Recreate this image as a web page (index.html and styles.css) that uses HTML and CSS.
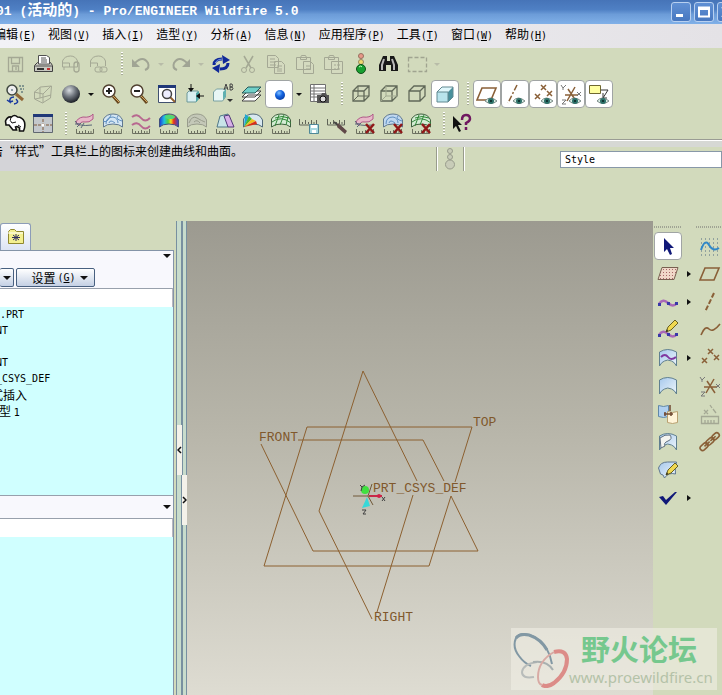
FILE: index.html
```html
<!DOCTYPE html>
<html lang="zh-CN">
<head>
  <meta charset="UTF-8" />
  <title>Pro/ENGINEER Wildfire 5.0</title>
  <link rel="stylesheet" href="styles.css">
</head>
<body>

  <!-- shared icon parts -->
  <svg class="defs" aria-hidden="true">
    <defs>
      <linearGradient id="blue" x1="0" y1="0" x2="1" y2="1">
        <stop offset="0" stop-color="#a6c8ec"/><stop offset="1" stop-color="#eef6fc"/>
      </linearGradient>
      <linearGradient id="rainbow">
        <stop offset="0" stop-color="#2038d8"/><stop offset=".25" stop-color="#20c0e0"/>
        <stop offset=".45" stop-color="#50d040"/><stop offset=".6" stop-color="#f0e020"/>
        <stop offset=".75" stop-color="#e83020"/><stop offset="1" stop-color="#3048d0"/>
      </linearGradient>
      <radialGradient id="ball" cx=".4" cy=".3" r=".7">
        <stop offset="0" stop-color="#d8dce0"/><stop offset=".5" stop-color="#70767e"/><stop offset="1" stop-color="#1c2026"/>
      </radialGradient>
      <radialGradient id="blueball" cx=".4" cy=".3" r=".7">
        <stop offset="0" stop-color="#80c0ff"/><stop offset=".5" stop-color="#1464e0"/><stop offset="1" stop-color="#0840a8"/>
      </radialGradient>
      <pattern id="dots" width="3" height="3" patternUnits="userSpaceOnUse"><path d="M0 0h1v1h-1z" fill="#a86868"/></pattern>
    </defs>
    <symbol id="ruler" viewBox="0 0 22 22"><path d="M2.500 16v4.500h17V16M5.500 18v2M8.500 18v2M11.500 17v3M14.500 18v2M17 18v2" fill="none" stroke="#6c7060"/></symbol>
    <symbol id="surf" viewBox="0 0 22 22"><path d="M1.500 14V6q3-5 9.500-5 7 0 9.500 6v7q-3-3-9.500-3T1.500 14z"/></symbol>
    <symbol id="redx" viewBox="0 0 22 22"><path d="M12 11l8 9M20 11l-8 9" stroke="#901818" stroke-width="2.500"/></symbol>
    <symbol id="eye" viewBox="0 0 22 22"><path d="M9 18q5-6 12 0-6 5-12 0z" fill="#d8ece4" stroke="#7c8c88"/><circle cx="15" cy="18" r="3" fill="#2c7068"/><circle cx="15" cy="18" r="1" fill="#082020"/></symbol>
    <symbol id="glass" viewBox="0 0 22 22"><path d="M13 13l6 7" stroke="#684820" stroke-width="3"/><path d="M13 13l6 6" stroke="#d8a860"/><circle cx="9" cy="8" r="6" fill="#fff" stroke="#504030" stroke-width="1.500"/></symbol>
    <symbol id="plane" viewBox="0 0 22 22"><path d="M6 5h14l-5 12H1z" fill="none" stroke="#8a6038" stroke-width="1.600"/></symbol>
    <symbol id="pts" viewBox="0 0 22 22"><path d="M9 2l5 5M14 2l-5 5M3 11l5 5M8 11l-5 5M15 8l5 5M20 8l-5 5" stroke="#8a6038" stroke-width="1.500"/></symbol>
    <symbol id="csys" viewBox="0 0 22 22"><path d="M5 12h13M8 6l8 12M15 4L7 18" stroke="#8a6038" stroke-width="1.500"/><path d="M1 2l2 3 3-3M3 5v2M17 9l4 4M21 9l-4 4M2 17h4l-4 4h4" fill="none" stroke="#787878"/></symbol>
    <symbol id="cube" viewBox="0 0 22 22"><path d="M3 8h11v10H3zM3 8l5-5h11v10l-5 5M14 8l5-5" fill="none" stroke="#606858" stroke-width="1.300"/></symbol>
    <symbol id="doc" viewBox="0 0 22 22"><path d="M1.500 2.500h8l3 3v9h-11zM4 6h5M4 9h6M4 12h6M8.500 8.500h7l3 3v9h-10zM11 13h5M11 16h5M11 18h5" fill="#d4dabf" stroke="#a4a894"/></symbol>
    <symbol id="light" viewBox="0 0 22 22"><circle cx="11" cy="3" r="2.500"/><circle cx="11" cy="9" r="2.500"/><circle cx="11" cy="16.500" r="4.500"/></symbol>
    <symbol id="face" viewBox="0 0 22 22"><path d="M2.500 19V5q8-5 17 0v14q-2-4-5-5-4-2-7 0-3 1-5 5z" fill="url(#blue)" stroke="#608090"/></symbol>
    <symbol id="pencil" viewBox="0 0 22 22"><path d="M9 13l2-5 7-7 3 3-7 7z" fill="#f0d850" stroke="#686020"/><path d="M9 13l2-1-1-2z" fill="#222"/></symbol>
    <symbol id="wave" viewBox="0 0 22 22"><path d="M2 13q4-6 9-1t9 0" fill="none" stroke="#a868b8" stroke-width="2.500"/><path d="M1 12h3v3H1zM10 11h3v3h-3zM18 11h3v3h-3z" fill="#3838a8"/></symbol>
  </svg>

  <header class="title-bar">
    <h1>01 (<span>活动的</span>) - Pro/ENGINEER Wildfire 5.0</h1>
    <div class="window-buttons">
      <button aria-label="最小化"><svg width="18" height="18"><path d="M4 11h7v3H4z" fill="#fff"/></svg></button>
      <button aria-label="最大化"><svg width="18" height="18"><path d="M4 4.500h10v9H4zM4 6h10" fill="none" stroke="#fff" stroke-width="2"/></svg></button>
      <button aria-label="关闭"><svg width="18" height="18"><path d="M4 4l10 10M14 4L4 14" stroke="#fff" stroke-width="2"/></svg></button>
    </div>
  </header>

  <nav class="menu-bar">
    <button>编辑<span class="latin">(<u>E</u>)</span></button>
    <button>视图<span class="latin">(<u>V</u>)</span></button>
    <button>插入<span class="latin">(<u>I</u>)</span></button>
    <button>造型<span class="latin">(<u>Y</u>)</span></button>
    <button>分析<span class="latin">(<u>A</u>)</span></button>
    <button>信息<span class="latin">(<u>N</u>)</span></button>
    <button>应用程序<span class="latin">(<u>P</u>)</span></button>
    <button>工具<span class="latin">(<u>T</u>)</span></button>
    <button>窗口<span class="latin">(<u>W</u>)</span></button>
    <button>帮助<span class="latin">(<u>H</u>)</span></button>
  </nav>

  <div class="toolbars">
    <!-- file / edit -->
    <div class="toolbar">
      <button class="tool" aria-label="保存"><svg class="icon"><path d="M4.500 4.500h14v14h-14zM7.500 4.500v6h8v-6M8.500 18v-5h6v5M12 14v3" fill="none" stroke="#a4a894" stroke-width="1.300"/></svg></button>
      <button class="tool" aria-label="打印"><svg class="icon"><path d="M2.500 12.500l3-3h13l2 3v6h-18z" fill="#c8c8c0" stroke="#404040"/><path d="M6.500 11V2.500h8l3 2V11z" fill="#fff" stroke="#505050"/><path d="M9 5h5M9 7h6M9 9h6M3 13h17" stroke="#555"/><path d="M5 16h7" stroke="#333" stroke-width="2"/><path d="M15 15h3v2h-3z" fill="#c03030"/></svg></button>
      <button class="tool" aria-label="发送附件"><svg class="icon"><path d="M2.500 14V8q2-5 8-5 5 0 7 5v6zM2.500 10h7v4M4 14v3" fill="none" stroke="#a4a894"/><rect x="14" y="9" width="5" height="10" rx="2.500" fill="none" stroke="#a4a894" stroke-width="1.300"/></svg></button>
      <button class="tool" aria-label="发送链接"><svg class="icon"><path d="M2.500 14V8q2-5 8-5 5 0 7 5v5M2.500 10h7v3" fill="none" stroke="#a4a894"/><rect x="7" y="14" width="7" height="5" rx="2" fill="none" stroke="#a4a894"/><rect x="12" y="14" width="7" height="5" rx="2" fill="none" stroke="#a4a894"/></svg></button>
      <i class="grip"></i>
      <button class="tool" aria-label="撤消"><svg class="icon"><path d="M5 10q8-8 13 0 2 5-3 7" fill="none" stroke="#a0a494" stroke-width="2"/><path d="M2 6v8h8z" fill="#a0a494"/></svg></button>
      <i class="more off"></i>
      <button class="tool" aria-label="重做"><svg class="icon"><path d="M17 10Q9 2 4 10q-2 5 3 7" fill="none" stroke="#a0a494" stroke-width="2"/><path d="M20 6v8h-8z" fill="#a0a494"/></svg></button>
      <i class="more off"></i>
      <button class="tool" aria-label="再生"><svg class="icon"><path d="M4 12q0-6 8-6M18 10q0 6-8 6" fill="none" stroke="#102898" stroke-width="3"/><path d="M12 2l8 5-7 4zM10 11l-8 4 7 5z" fill="#102898"/><path d="M5 10q2-4 7-4" fill="none" stroke="#7090e0"/></svg></button>
      <button class="tool" aria-label="剪切"><svg class="icon"><path d="M6 3l7 12M15 3L8 15" stroke="#a4a894" stroke-width="1.500"/><circle cx="6" cy="17" r="2.500" fill="none" stroke="#a4a894"/><circle cx="14" cy="17" r="2.500" fill="none" stroke="#a4a894"/></svg></button>
      <button class="tool" aria-label="复制"><svg class="icon"><use href="#doc"/></svg></button>
      <button class="tool" aria-label="粘贴"><svg class="icon"><path d="M2.500 4.500h14v12h-14zM6.500 4.500l1-2h4l1 2v2h-6zM9.500 8.500h7l3 3v9h-10zM12 13h5M12 16h5" fill="#d4dabf" stroke="#a4a894"/></svg></button>
      <button class="tool" aria-label="选择性粘贴"><svg class="icon"><path d="M2.500 4.500h14v12h-14zM6.500 4.500l1-2h4l1 2v2h-6zM9.500 8.500h11v12h-11zM12 12h2M15 12h3M12 16h2M15 16h3" fill="#d4dabf" stroke="#a4a894"/></svg></button>
      <button class="tool" aria-label="再生管理器"><svg class="icon"><circle cx="11" cy="3" r="2.500" fill="#e89888" stroke="#987060"/><circle cx="11" cy="9" r="2.500" fill="#f0d870" stroke="#988860"/><circle cx="11" cy="16" r="4.500" fill="#18a030" stroke="#105018"/><path d="M9 14q2-2 3 0" stroke="#c0ffc0" fill="none"/></svg></button>
      <button class="tool" aria-label="查找"><svg class="icon"><path d="M5 3h4v5h3V3h4l4 9v6h-7v-6h-5v6H1v-6z" fill="#181818"/><path d="M6 6L4 12v5M14 6l2 6v5" fill="none" stroke="#b8b8b8" stroke-width="2"/></svg></button>
      <button class="tool" aria-label="选取框"><svg class="icon"><path d="M2.500 4.500h18v14h-18z" fill="none" stroke="#a0a490" stroke-width="1.300" stroke-dasharray="4 2"/></svg></button>
      <i class="more off"></i>
    </div>

    <!-- view / datum display -->
    <div class="toolbar">
      <button class="tool" aria-label="重定向"><svg class="icon"><path d="M12 11l7 6" stroke="#906838" stroke-width="3"/><circle cx="8" cy="7" r="5" fill="#eee" stroke="#404840" stroke-width="1.500"/><path d="M7 7h3M15 3h5M16 6h4M17 9h2" stroke="#305060" stroke-dasharray="2 1"/><path d="M10 14q-5 0-4 5l-3-2M6 19l3-1M12 16q4 4-2 5" fill="none" stroke="#1838a0" stroke-width="1.500"/></svg></button>
      <button class="tool" aria-label="线框"><svg class="icon"><path d="M2.500 9l6-5 11-1-1 12-8 5-8-4zM2 9l9 2 8-8M11 11v9M8 4v11l11-3M8 15l-5 1" fill="none" stroke="#a4a894"/></svg></button>
      <button class="tool" aria-label="着色"><svg class="icon"><circle cx="11" cy="11" r="9" fill="url(#ball)"/></svg></button>
      <i class="more"></i>
      <button class="tool" aria-label="放大"><svg class="icon"><use href="#glass"/><path d="M6 8h6M9 5v6" stroke="#222" stroke-width="2"/></svg></button>
      <button class="tool" aria-label="缩小"><svg class="icon"><use href="#glass"/><path d="M6 8h6" stroke="#222" stroke-width="2"/></svg></button>
      <button class="tool" aria-label="重新调整"><svg class="icon"><path d="M2.500 2.500h17v17h-17z" fill="#fff" stroke="#405070"/><path d="M2 2h18v3H2z" fill="#203878"/><path d="M14 14l5 5" stroke="#906030" stroke-width="2"/><circle cx="11" cy="11" r="4.500" fill="#eef" stroke="#444" stroke-width="1.500"/></svg></button>
      <button class="tool" aria-label="定向"><svg class="icon"><path d="M3 10l2-2h9v8l-2 3H3z" fill="#d8eef0" stroke="#6c9898"/><path d="M12 10v9l3-3V8z" fill="#50a8a8"/><path d="M7 1v7M20 13h-6" stroke="#111"/><path d="M4 5h6l-3 4zM16 10v6l-4-3z" fill="#111"/></svg></button>
      <button class="tool" aria-label="已命名视图"><svg class="icon"><path d="M1.500 9l3-3h9v8l-3 4h-9z" fill="#e8f6f4" stroke="#78a0a0"/><path d="M11 9v8l3-4V6z" fill="#60b0b0"/><path d="M12 7l2-6 2 6M13 5h3M18 1v6h2q2-1 0-3h-2 2q1-2 0-3z" fill="none" stroke="#444"/><path d="M15 16h6l-3 3z" fill="#333"/></svg></button>
      <button class="tool" aria-label="层"><svg class="icon"><path d="M8 12h13l-6 6H2zM8 8h13l-6 6H2z" fill="#fff" stroke="#444"/><path d="M8 4h13l-6 6H2z" fill="#70d0c8" stroke="#285858"/></svg></button>
      <button class="tool pressed" aria-label="外观库"><svg class="icon"><circle cx="12" cy="12" r="5" fill="url(#blueball)"/></svg></button>
      <i class="more"></i>
      <button class="tool" aria-label="视图管理器"><svg class="icon"><path d="M2.500 1.500h15v17h-15zM2 5h15M2 8h15M2 11h15M2 14h15M6 1v17" fill="#fff" stroke="#707070"/><path d="M9 12h4l1-2h4l1 2h2v8H9z" fill="#555"/><circle cx="15" cy="16" r="3" fill="#ddd" stroke="#111"/></svg></button>
      <i class="grip"></i>
      <button class="tool" aria-label="线框显示"><svg class="icon"><use href="#cube"/><path d="M8 3v10h11M8 13l-5 5" fill="none" stroke="#606858"/></svg></button>
      <button class="tool" aria-label="隐藏线"><svg class="icon"><use href="#cube"/><path d="M8 3v10h11M8 13l-5 5" fill="none" stroke="#a0a890"/></svg></button>
      <button class="tool" aria-label="无隐藏线"><svg class="icon"><use href="#cube"/></svg></button>
      <button class="tool pressed" aria-label="着色显示"><svg class="icon"><path d="M3 9h11v10H3z" fill="#b8e4ec"/><path d="M3 9l5-5h11l-5 5z" fill="#e0f8fc"/><path d="M14 9l5-5v10l-5 5z" fill="#48909c"/><path d="M3 9l5-5h11v10l-5 5H3zh11v10" fill="none" stroke="#608890"/></svg></button>
      <i class="grip"></i>
      <button class="tool pressed" aria-label="基准平面开关"><svg class="icon"><use href="#plane"/><use href="#eye"/></svg></button>
      <button class="tool pressed" aria-label="基准轴开关"><svg class="icon"><path d="M13 2L4 20" stroke="#8a6038" stroke-width="1.500" stroke-dasharray="6 2 2 2"/><use href="#eye"/></svg></button>
      <button class="tool pressed" aria-label="基准点开关"><svg class="icon"><use href="#pts"/><use href="#eye"/></svg></button>
      <button class="tool pressed" aria-label="坐标系开关"><svg class="icon"><use href="#csys"/><use href="#eye"/></svg></button>
      <button class="tool pressed" aria-label="注释开关"><svg class="icon"><path d="M1.500 2.500h11v8h-11z" fill="#ffffa0" stroke="#706830"/><path d="M13 7h7l-5 8M15 10v5h4" fill="none" stroke="#333"/><use href="#eye"/></svg></button>
    </div>

    <!-- analysis -->
    <div class="toolbar">
      <button class="tool" aria-label="线框模型"><svg class="icon"><path d="M1.500 8q2-5 6-4 3-3 6 0 5 0 7 5 1 5-1 9h-4v-3q-2-2-4-1l1 3H9l-4-5H2z" fill="#fff" stroke="#111" stroke-width="1.600"/><path d="M7 4q-2 4 1 6l4-1M14 12l3 2" fill="none" stroke="#111"/></svg></button>
      <button class="tool" aria-label="活动视图"><svg class="icon"><path d="M1.500 2.500h19v17h-19z" fill="#c4c8cc" stroke="#606870"/><path d="M1 1h20v3H1z" fill="#203878"/><path d="M11 6v13M2 12h18" stroke="#805838" stroke-dasharray="3 1"/><circle cx="11" cy="12" r="1.500" fill="#fff"/></svg></button>
      <i class="grip"></i>
      <button class="tool" aria-label="曲率"><svg class="icon"><path d="M2 10q1-5 7-6 7 1 10-3v5q-4 4-8 3-5-1-6 4z" fill="#e8b8c8" stroke="#b05888"/><path d="M1 8q3 6 17 4M3 14l4-4M7 15l3-5M1 11h5" fill="none" stroke="#586878"/><use href="#ruler"/></svg></button>
      <button class="tool" aria-label="截面"><svg class="icon"><use href="#surf" fill="#d4e6f4" stroke="#607890"/><path d="M4 11q0-7 7-7 5 1 5 6M7 10q1-4 6 0M16 3q-3 3 4 5M1 8q4 3 8-6" fill="none" stroke="#6090c0"/><use href="#ruler"/></svg></button>
      <button class="tool" aria-label="偏移"><svg class="icon"><path d="M2 4q5-4 9 1t9 0M2 12q5-4 9 1t9 0" fill="none" stroke="#b86890" stroke-width="2"/><use href="#ruler"/></svg></button>
      <button class="tool" aria-label="着色曲率"><svg class="icon"><use href="#surf" fill="url(#rainbow)" stroke="#405080"/><ellipse cx="12" cy="4" rx="5" ry="2" fill="#50d878"/><use href="#ruler"/></svg></button>
      <button class="tool" aria-label="反射"><svg class="icon"><use href="#surf" fill="#c4c8b8" stroke="#989c8c"/><path d="M3 10q3-8 8-5t8 4M8 9q3-3 6 1" fill="none" stroke="#989c8c"/><use href="#ruler"/></svg></button>
      <button class="tool" aria-label="拔模"><svg class="icon"><path d="M3 14L6 3l8-2v13z" fill="#c8e4e8" stroke="#507888"/><path d="M10 3l5-1 5 12h-6z" fill="#d8b0e8" stroke="#503878"/><use href="#ruler"/></svg></button>
      <button class="tool" aria-label="斜率"><svg class="icon"><use href="#surf" fill="#d8e8f0" stroke="#506878"/><path d="M2 14L3 1l4 3z" fill="#20a8d0"/><path d="M2 14L7 3l3 3z" fill="#48b830"/><path d="M2 14l8-8 4 2z" fill="#f0c020"/><path d="M2 14l12-6 1 3z" fill="#d83018"/><use href="#ruler"/></svg></button>
      <button class="tool" aria-label="曲面节点"><svg class="icon"><use href="#surf" fill="#d4ecd4" stroke="#406040"/><path d="M2 9q9-7 19 1M5 13L9 2M10 12l4-10M16 12l2-8M5 5q7-3 14 0" fill="none" stroke="#308838"/><use href="#ruler"/></svg></button>
      <button class="tool" aria-label="保存的分析"><svg class="icon"><path d="M1.500 6v6h17V7M4.500 9v2M7.500 7v4M10.500 9v2M13.500 7v4M16 9v2" fill="none" stroke="#606458"/><path d="M11.500 11.500h9v9h-9z" fill="#a8d8e0" stroke="#508898"/><path d="M13 12h6v3h-6zM14 17h4v3h-4z" fill="#fff"/></svg></button>
      <button class="tool" aria-label="隐藏分析"><svg class="icon"><path d="M1.500 6v6h17V7M4.500 9v2M7.500 7v4M10.500 9v2M13.500 7v4M16 9v2" fill="none" stroke="#606458"/><path d="M8 9l9 7" stroke="#444" stroke-width="2"/><path d="M12 10l9 8-2 3-8-7z" fill="#604848"/></svg></button>
      <button class="tool" aria-label="删除曲率"><svg class="icon"><path d="M2 10q1-5 7-6 7 1 10-3v5q-4 4-8 3-5-1-6 4z" fill="#e8b8c8" stroke="#b05888"/><path d="M1 8q3 6 17 4M3 14l4-4M1 11h5" fill="none" stroke="#586878"/><use href="#ruler"/><use href="#redx"/></svg></button>
      <button class="tool" aria-label="删除截面"><svg class="icon"><use href="#surf" fill="#c0d8f0" stroke="#607890"/><path d="M4 11q0-7 7-7 5 1 5 6M7 10q1-4 6 0M16 3q-3 3 4 5" fill="none" stroke="#6090c0"/><use href="#ruler"/><use href="#redx"/></svg></button>
      <button class="tool" aria-label="删除节点"><svg class="icon"><use href="#surf" fill="#d4ecd4" stroke="#406040"/><path d="M2 9q9-7 19 1M5 13L9 2M10 12l4-10M5 5q7-3 14 0" fill="none" stroke="#308838"/><use href="#ruler"/><use href="#redx"/></svg></button>
      <i class="grip"></i>
      <button class="tool" aria-label="上下文帮助"><svg class="icon"><path d="M1 3v13l3-3 3 6 2-1-3-6h4z" fill="#111"/><path d="M10 7q0-5 4-5t4 4q0 2-4 4v2M14 14v3" fill="none" stroke="#701860" stroke-width="2.500"/></svg></button>
    </div>
  </div>

  <div class="status-bar">
    <p class="message">击“样式”工具栏上的图标来创建曲线和曲面。</p>
    <div class="status-tools">
      <span class="lamp"><svg class="icon" fill="#c8ccb8" stroke="#989c8c"><use href="#light"/></svg></span>
      <select class="latin" aria-label="过滤器"><option>Style</option></select>
    </div>
  </div>

  <main class="workspace">
    <!-- model tree -->
    <aside class="navigator">
      <div class="tabs">
        <button class="tab" aria-label="模型树"><svg width="18" height="18"><path d="M1.500 15.500v-12l2-2h4l2 2h7v12z" fill="#f4f090" stroke="#908830"/><path d="M1 5h15" stroke="#fff"/><path d="M9 6v7M5 9.500h8M6 7l6 5M12 7l-6 5" stroke="#303060"/></svg></button>
      </div>
      <div class="panel">
        <div class="panel-head"><i class="down"></i></div>
        <div class="panel-buttons">
          <button class="drop" aria-label="显示"><i class="down"></i></button>
          <button class="drop wide">设置<span class="latin">(<u>G</u>)</span><i class="down"></i></button>
        </div>
        <div class="column-head"></div>
        <ul class="tree latin">
          <li>.PRT</li>
          <li>NT</li>
          <li></li>
          <li>NT</li>
          <li>_CSYS_DEF</li>
          <li class="cjk">式插入</li>
          <li class="cjk">型 <span class="latin">1</span></li>
        </ul>
        <div class="style-head"><i class="down"></i></div>
        <div class="column-head"></div>
        <div class="style-tree"></div>
      </div>
    </aside>

    <div class="splitter">
      <button class="handle" aria-label="收起"><svg width="5" height="8"><path d="M4 1L1 4l3 3" fill="none" stroke="#111" stroke-width="1.500"/></svg></button>
      <button class="handle right" aria-label="展开"><svg width="5" height="8"><path d="M1 1l3 3-3 3" fill="none" stroke="#111" stroke-width="1.500"/></svg></button>
    </div>

    <svg class="viewport">
      <!-- datum planes: RIGHT, TOP, FRONT -->
      <g class="datum">
        <path d="M230 260L176 150L132 290L185 398M190 391L226 274"/>
        <path d="M268 261L285 206H120L77 345H242L264 275"/>
        <path d="M74 223L126 330H291L264 275M111 219H236L257 260"/>
      </g>
      <!-- coordinate system -->
      <path d="M166 275h15M181 275l4-12M181 275l5 9" stroke="#705838"/>
      <path d="M182 275h13" stroke="#c82848" stroke-width="2"/>
      <circle cx="192" cy="275" r="2" fill="#d02048"/>
      <circle cx="178" cy="269" r="4" fill="#40e040"/>
      <path d="M180 276l3 9-8 2z" fill="#38d8d8"/>
      <path d="M173 264l2 2 3-2M175 266l-1 4M195 276l3 4M198 276l-3 4M175 289h4l-3 4h3" fill="none" stroke="#404040"/>
      <g class="labels">
        <text x="72" y="220">FRONT</text>
        <text x="286" y="205">TOP</text>
        <text x="186" y="271">PRT_CSYS_DEF</text>
        <text x="187" y="400">RIGHT</text>
      </g>
    </svg>

    <aside class="side-tools">
      <i class="side-grip"></i><i></i><i class="side-grip"></i>
      <button class="tool pressed" aria-label="选取"><svg class="icon"><path d="M7 3v14l3-3 3 6 2-1-2-6h4z" fill="#101878"/></svg></button><i></i>
      <button class="tool" aria-label="造型"><svg class="icon"><path d="M2 4h18M2 8h18M2 12h18M2 16h18M2 20h18" stroke="#506880" stroke-dasharray="1 3"/><path d="M2 15q4-12 8-5t10 3" fill="none" stroke="#3088c8" stroke-width="2"/></svg></button>
      <button class="tool" aria-label="活动平面"><svg class="icon"><path d="M5 4.500h16l-4 12H1z" fill="#f0d8c8"/><path d="M5 4.500h16l-4 12H1z" fill="url(#dots)" stroke="#786050"/></svg></button><i class="next"></i>
      <button class="tool" aria-label="平面"><svg class="icon"><use href="#plane"/></svg></button>
      <button class="tool" aria-label="曲线"><svg class="icon"><use href="#wave"/></svg></button><i class="next"></i>
      <button class="tool" aria-label="轴"><svg class="icon"><path d="M15 2L6 21" stroke="#8a6038" stroke-width="2" stroke-dasharray="5 2"/></svg></button>
      <button class="tool" aria-label="编辑曲线"><svg class="icon"><use href="#wave" y="3"/><use href="#pencil"/></svg></button><i></i>
      <button class="tool" aria-label="基准曲线"><svg class="icon"><path d="M2 16Q6 6 10 10t11-5" fill="none" stroke="#8a6038" stroke-width="1.600"/></svg></button>
      <button class="tool" aria-label="投影曲线"><svg class="icon"><use href="#face"/><path d="M4 10q4-4 7 0t8 0" fill="none" stroke="#8038a0" stroke-width="2"/></svg></button><i class="next"></i>
      <button class="tool" aria-label="基准点"><svg class="icon"><use href="#pts"/></svg></button>
      <button class="tool" aria-label="曲面"><svg class="icon"><use href="#face"/></svg></button><i></i>
      <button class="tool" aria-label="坐标系"><svg class="icon"><use href="#csys"/></svg></button>
      <button class="tool" aria-label="连接曲面"><svg class="icon"><path d="M1.500 2.500q5 2 10 0v11q-5 2-10 0z" fill="#b0d0f0" stroke="#6088a8"/><path d="M10.500 8.500q5 2 10 0v11q-5 2-10 0z" fill="#fff4d8" stroke="#b8a070"/><path d="M7 11h9M8 9v4M14 9v4M13 2v6" stroke="#704830" stroke-width="1.500"/></svg></button><i></i>
      <button class="tool" aria-label="分析点"><svg class="icon"><path d="M2.500 13.500h17v7h-17zM6 17v3M9 17v3M12 17v3M15 17v3M5 7l4 4M9 7l-4 4M11 2l2 3M14 6l3 4" fill="none" stroke="#a4a894" stroke-width="1.300"/></svg></button>
      <button class="tool" aria-label="修剪曲面"><svg class="icon"><use href="#face"/><path d="M4 17l4-2q-2-3 3-5t2-6q-5-1-10 3z" fill="#f4f4f0" stroke="#607080"/></svg></button><i></i>
      <button class="tool" aria-label="链接"><svg class="icon" fill="none" stroke="#8a6038" stroke-width="1.600"><g transform="rotate(-42 11 11)"><rect x="-1" y="8" width="9" height="5" rx="2.500"/><rect x="7" y="8" width="9" height="5" rx="2.500"/><rect x="15" y="8" width="8" height="5" rx="2.500"/><path d="M4 10.500h7M12 10.500h7"/></g></svg></button>
      <button class="tool" aria-label="编辑曲面"><svg class="icon"><path d="M1.500 9q2-6 9-6h9q-2 6-1 12-7-2-11 4-1-4-4-4z" fill="url(#blue)" stroke="#607890"/><use href="#pencil" y="3"/></svg></button><i></i><i></i>
      <button class="tool" aria-label="完成"><svg class="icon"><path d="M2 10l4-1 3 4 9-8h2L9 18z" fill="#101878"/></svg></button><i class="next"></i><i></i>
    </aside>
  </main>

  <div class="watermark">
    <svg width="58" height="58" fill="none">
      <path d="M41 34Q38 16 25 8 10 0 5 8 1 17 8 26q5 7 12 10" stroke="#8298a4" stroke-width="2"/>
      <path d="M36 20Q30 9 18 5 9 3 5 8" stroke="#8298a4" stroke-width="3"/>
      <path d="M26 32q-14 2-15 10 0 7 12 5" stroke="#b8bcba" stroke-width="2"/>
      <path d="M22 32q14-2 20 8" stroke="#a8b0b0" stroke-width="2"/>
      <path d="M43 22q12-3 13 7 0 14-13 24-7 5-12 2" stroke="#dc8c88" stroke-width="4"/>
      <path d="M43 22q-16 9-16 25 0 7 4 8" stroke="#d8aaa4" stroke-width="2"/>
    </svg>
    <div>
      <strong>野火论坛</strong>
      <a href="#">www.proewildfire.cn</a>
    </div>
  </div>

</body>
</html>
```
FILE: styles.css
```css
* {
  box-sizing: border-box;
}

body {
  margin: 0;
  height: 100vh;
  display: flex;
  flex-direction: column;
  overflow: hidden;
  position: relative;
  background: #d2dabc;
  color: #000;
  font: 12px/16px "Noto Sans CJK SC", sans-serif;
}

button {
  margin: 0;
  padding: 0;
  border: 0;
  background: none;
  color: inherit;
  font: inherit;
}

.latin {
  font-family: "DejaVu Sans Mono", "Noto Sans CJK SC", monospace;
  font-size: 10px;
}

.defs {
  position: absolute;
  width: 0;
  height: 0;
}

.icon {
  display: block;
  flex: none;
  width: 22px;
  height: 22px;
}

/* title and menu */
.title-bar {
  flex: none;
  display: flex;
  justify-content: space-between;
  height: 24px;
  background: linear-gradient(#4674b8, #4f80c4 40%, #6c9cd8 60%, #80b0e8);
  overflow: hidden;
}

.title-bar h1 {
  margin: 0 0 0 -4px;
  color: #fff;
  font: bold 13px/24px "Liberation Mono", "Noto Sans CJK SC", monospace;
  white-space: nowrap;
}

.title-bar h1 span {
  font-size: 15px;
}

.window-buttons {
  display: flex;
  gap: 3px;
  padding-top: 2px;
  margin-right: -15px;
}

.window-buttons button {
  width: 20px;
  height: 20px;
  border: 1px solid #b8d0f0;
  border-radius: 3px;
  background: linear-gradient(#6090d4, #4878c0);
}

.window-buttons svg {
  display: block;
}

.menu-bar {
  flex: none;
  display: flex;
  gap: 12px;
  height: 24px;
  padding-bottom: 2px;
  background: linear-gradient(90deg, #f2f2f6, #e4e2e6);
}

.menu-bar button {
  white-space: nowrap;
}

.menu-bar button:first-child {
  margin-left: -6px;
}

/* tool bars */
.toolbars {
  flex: none;
  padding: 1px 0 0 1px;
  border-bottom: 1px solid #9a9c94;
  box-shadow: 0 1px #fff;
}

.toolbar {
  display: flex;
  align-items: center;
  height: 30px;
}

.tool {
  display: flex;
  flex: none;
  align-items: center;
  justify-content: center;
  width: 28px;
  height: 28px;
}

.pressed {
  border: 1px solid #a0a4a4;
  border-radius: 4px;
  background: #fff;
}

.grip {
  flex: none;
  width: 14px;
  height: 24px;
  background: repeating-linear-gradient(#fff 0 1px, #a8ac98 1px 2px, #d2dabc 2px 3px) 8px 0 / 2px 24px no-repeat;
}

.more,
.down {
  flex: none;
  width: 12px;
}

.more::before,
.down::before {
  content: "";
  display: block;
  width: 0;
  margin: auto;
  border: 3px solid transparent;
  border-top-color: #111;
  border-bottom: 0;
}

.down::before {
  border-width: 4px 4px 0;
}

.more.off::before {
  border-top-color: #b8bca8;
}

.next::before {
  content: "";
  display: block;
  width: 0;
  margin: 11px 5px;
  border: 3px solid transparent;
  border-left: 4px solid #111;
  border-right: 0;
}

/* message line */
.status-bar {
  flex: none;
  display: flex;
  height: 31px;
  padding-top: 1px;
}

.message {
  flex: 0 0 400px;
  margin: 0;
  padding-top: 2px;
  background: #d4d4d8;
  text-indent: -9px;
  white-space: nowrap;
  overflow: hidden;
}

.status-tools {
  flex: 1;
  display: flex;
  align-items: center;
  border-top: 6px solid #d6d8d4;
  padding-left: 36px;
}

.lamp {
  margin-right: 96px;
  padding: 1px 2px;
  border: 1px solid #989c8c;
  border-width: 0 1px;
  box-shadow: 1px 0 #fff, inset 1px 0 #fff;
}

.status-tools select {
  flex: 1;
  height: 17px;
  padding: 0 4px;
  border: 1px solid #8898a8;
  border-radius: 0;
  background: #fff;
  color: #000;
  appearance: none;
}

/* work area */
.workspace {
  flex: 1;
  display: flex;
  min-height: 0;
  padding-top: 50px;
}

.navigator {
  flex: none;
  display: flex;
  flex-direction: column;
  width: 174px;
  padding-top: 2px;
}

.tab {
  display: flex;
  align-items: center;
  justify-content: center;
  width: 31px;
  height: 27px;
  border: 1px solid #8c9cb8;
  border-bottom: 0;
  border-radius: 3px 3px 0 0;
  background: linear-gradient(#fff, #dce4f4);
}

.panel {
  flex: 1;
  display: flex;
  flex-direction: column;
  border: 1px solid #8494a8;
  border-width: 1px 1px 0 0;
  background: #f8f8fd;
}

.panel-head,
.style-head {
  display: flex;
  justify-content: flex-end;
}

.panel-head {
  height: 17px;
  padding-top: 3px;
}

.panel-buttons {
  display: flex;
  gap: 2px;
  height: 20px;
}

.drop {
  display: flex;
  align-items: center;
  justify-content: center;
  width: 14px;
  height: 19px;
  border: 1px solid #486080;
  border-radius: 2px;
  background: linear-gradient(#fff, #c4d0e4);
}

.drop:first-child {
  border-left: 0;
}

.drop.wide {
  width: 79px;
  gap: 2px;
  padding-left: 10px;
}

.column-head {
  flex: none;
  height: 19px;
  border-top: 1px solid #98a0ac;
  border-right: 1px solid #b8b8c0;
  background: #fff;
}

.tree {
  flex: none;
  height: 188px;
  margin: 0;
  padding: 0;
  list-style: none;
}

.tree,
.style-tree {
  background: #d0ffff;
}

.tree li {
  height: 16px;
  white-space: pre;
}

.tree li:nth-child(2),
.tree li:nth-child(4),
.tree li:nth-child(5) {
  text-indent: -4px;
}

.tree .cjk {
  font: 12px/16px "Noto Sans CJK SC", sans-serif;
  text-indent: -9px;
}

.tree .cjk:last-child {
  text-indent: -1px;
}

.style-head {
  height: 23px;
  padding-top: 9px;
  border-top: 1px solid #98a0ac;
}

.style-tree {
  flex: 1;
}

.splitter {
  flex: none;
  display: flex;
  flex-direction: column;
  justify-content: center;
  width: 11px;
  margin-left: 2px;
  padding-top: 34px;
  border: 1px solid #7890a0;
  border-width: 0 1px;
  background: linear-gradient(90deg, #c8dccc 4px, #7890a0 4px 6px, #c8dccc 6px);
}

.handle {
  display: flex;
  align-items: center;
  width: 5px;
  height: 50px;
  background: #f4f2ea;
}

.handle.right {
  margin-left: 5px;
}

.viewport {
  flex: 1;
  min-width: 0;
  height: 100%;
  background: linear-gradient(#9c9a90, #b8b6aa 45%, #dedcd2);
}

.datum {
  fill: none;
  stroke: #8c6030;
}

.labels {
  fill: #80582c;
  font: 13px "Liberation Mono", monospace;
}

.side-tools {
  flex: none;
  display: grid;
  grid-template-columns: 28px 14px 28px;
  grid-template-rows: 11px;
  grid-auto-rows: 28px;
  align-content: start;
  width: 69px;
  padding-left: 1px;
  overflow: hidden;
}

.side-grip {
  height: 2px;
  margin-top: 5px;
  background: repeating-linear-gradient(90deg, #a0a494 0 1px, #d2dabc 1px 2px);
}

/* forum badge */
.watermark {
  position: absolute;
  right: 5px;
  bottom: 5px;
  display: flex;
  width: 206px;
  height: 62px;
  padding-top: 2px;
  background: rgba(240, 238, 228, 0.6);
}

.watermark strong {
  display: block;
  margin-left: 12px;
  color: #76c88e;
  font-size: 29px;
  line-height: 36px;
  white-space: nowrap;
}

.watermark a {
  display: block;
  margin-top: 1px;
  color: #b4c2a8;
  font: 15px/20px "Noto Sans", sans-serif;
  text-decoration: none;
}
```
